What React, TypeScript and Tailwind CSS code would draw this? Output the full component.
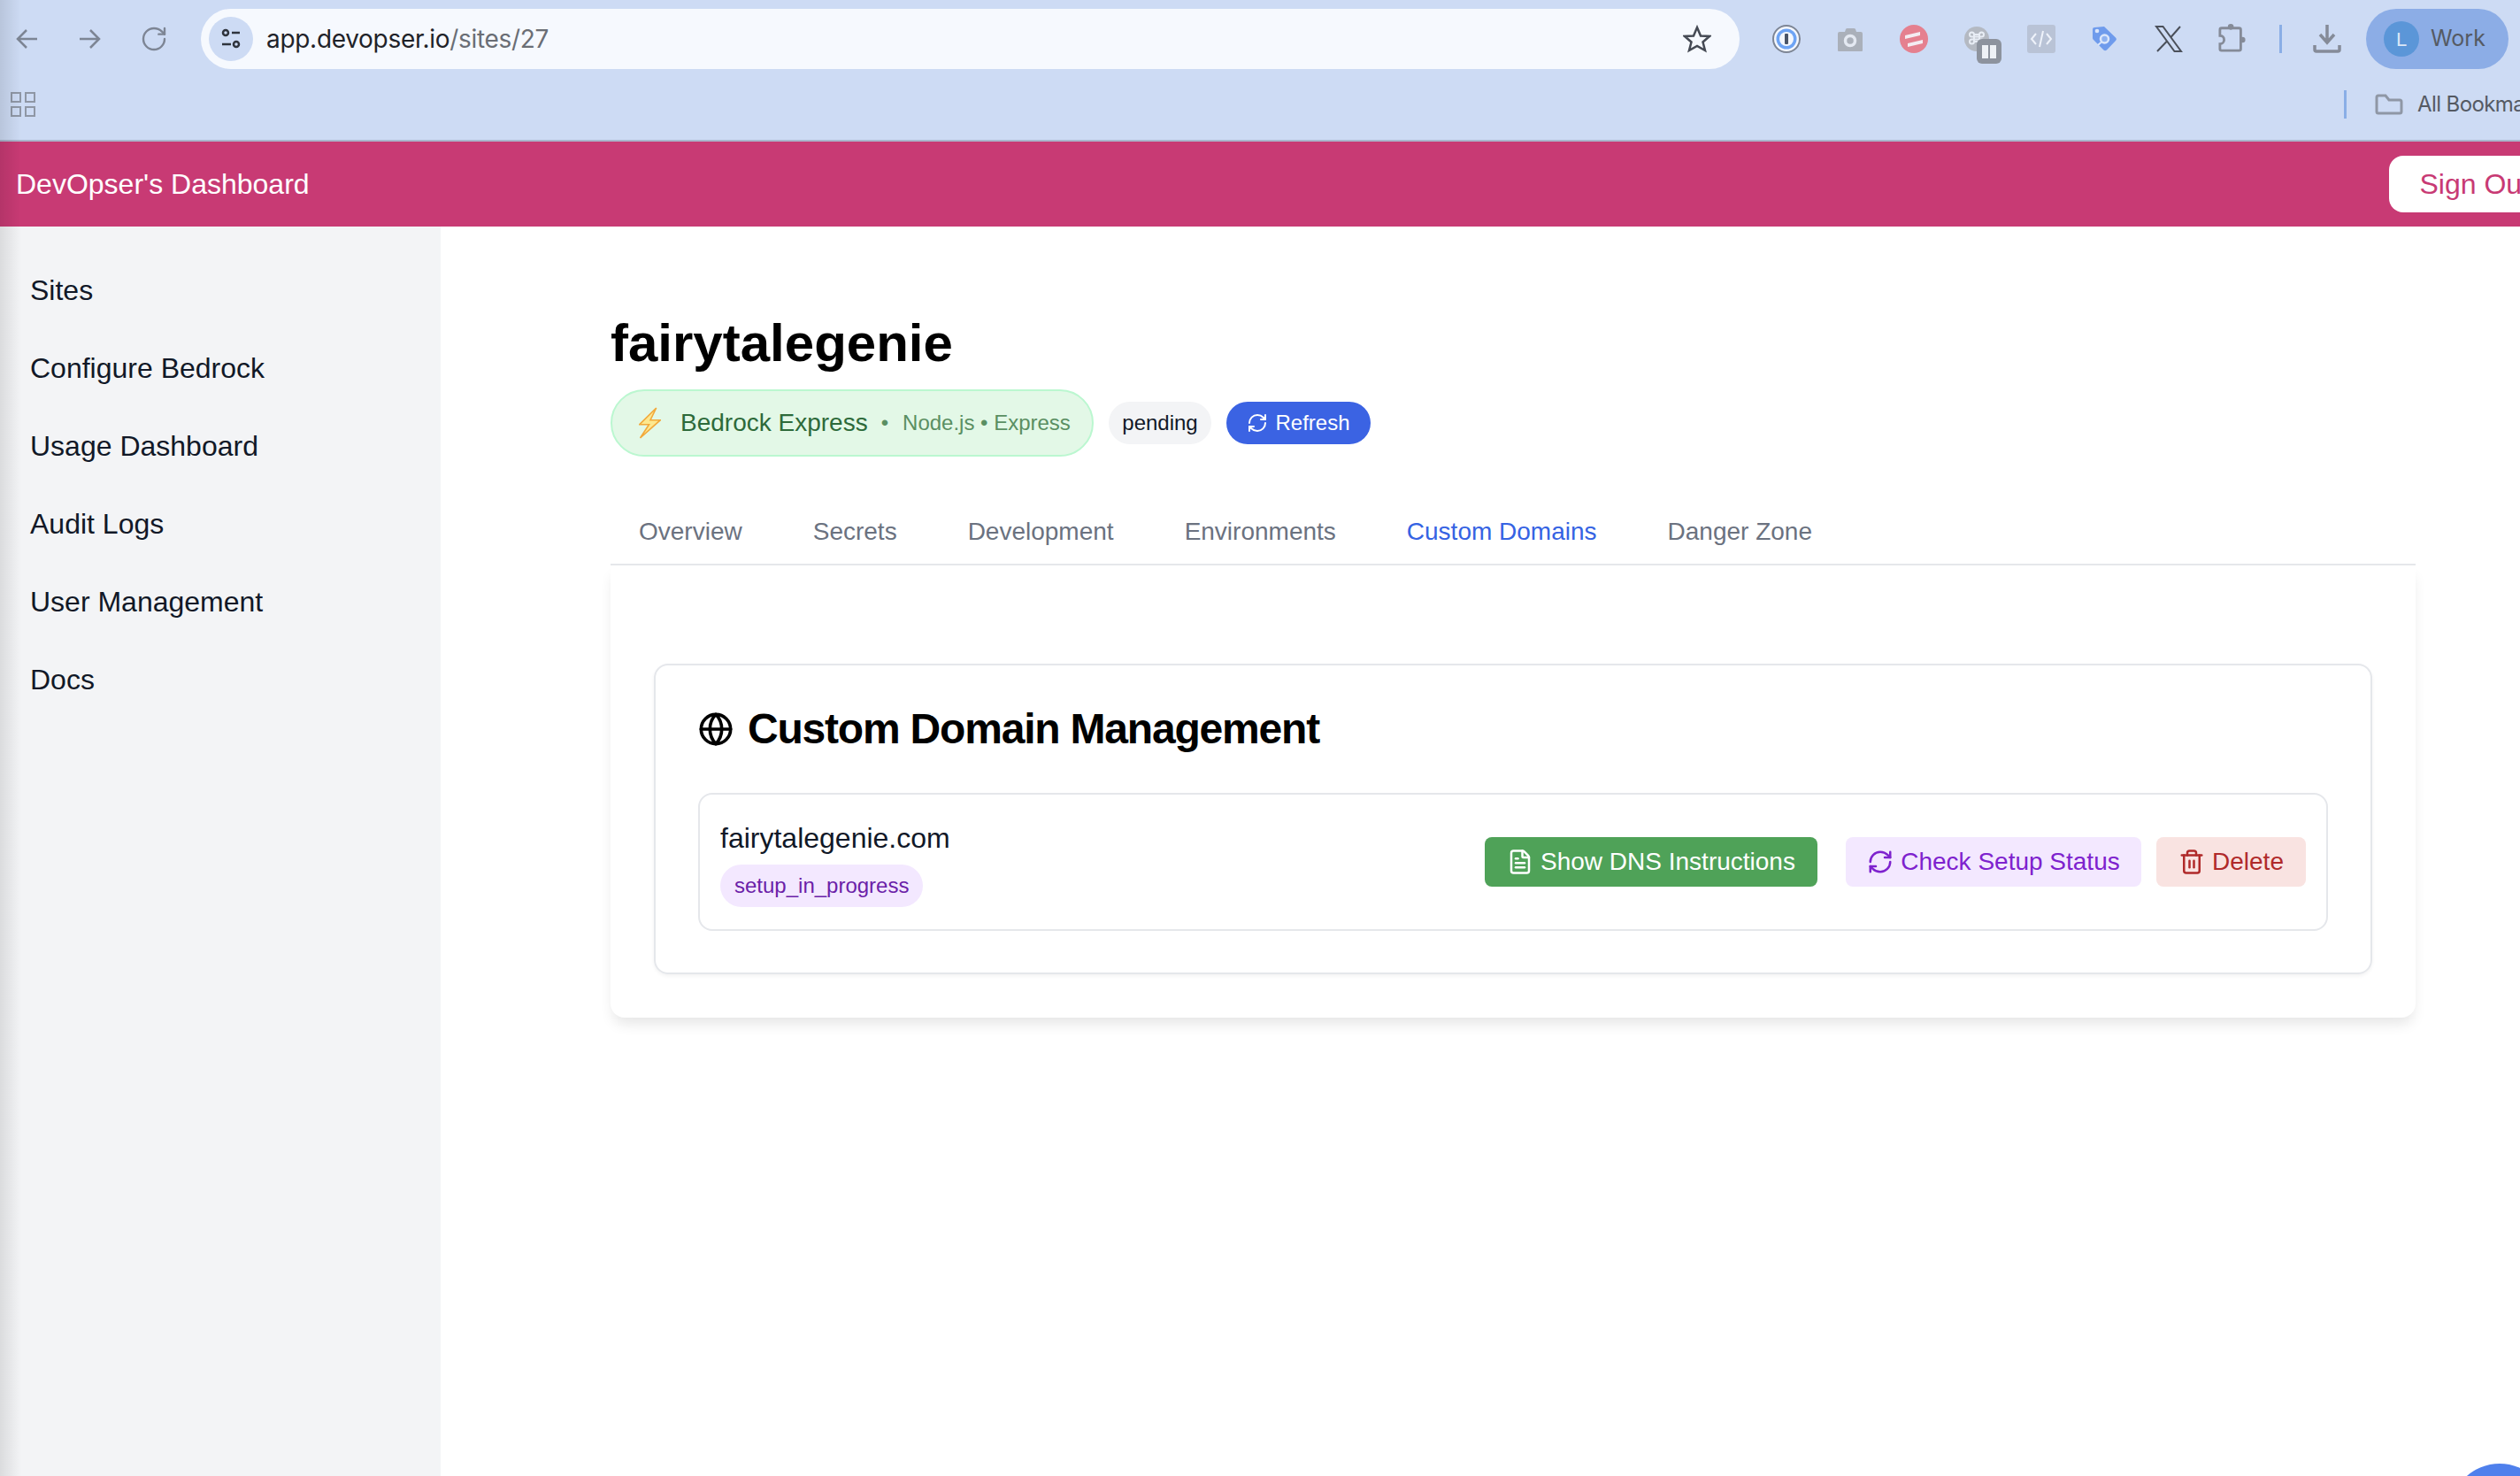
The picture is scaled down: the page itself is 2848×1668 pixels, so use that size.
import { Globe, RefreshCw, FileText, Trash2, RotateCw } from "lucide-react";

const tabs = ["Overview", "Secrets", "Development", "Environments", "Custom Domains", "Danger Zone"];
const navItems = ["Sites", "Configure Bedrock", "Usage Dashboard", "Audit Logs", "User Management", "Docs"];

const sans = "font-['Liberation_Sans',Arial,sans-serif]";

const ExtensionIcons = () => (
  <div className="flex items-center gap-[40px] ml-[37px]">
    {/* password manager */}
    <svg width="32" height="32" viewBox="0 0 32 32">
      <circle cx="16" cy="16" r="15" fill="#f4f7fd" stroke="#7d8594" strokeWidth="2" />
      <circle cx="16" cy="16" r="11.500" fill="#6ea4f4" />
      <circle cx="16" cy="16" r="8" fill="#f4f7fd" />
      <rect x="14" y="10" width="4" height="12" rx="1" fill="#4a5568" />
    </svg>
    <svg width="32" height="32" viewBox="0 0 32 32">
      <path d="M2 10a2 2 0 0 1 2-2h6l1-3a2 2 0 0 1 2-1h7a2 2 0 0 1 2 1l1 3h5a2 2 0 0 1 2 2v19a1 1 0 0 1-1 1H3a1 1 0 0 1-1-1z" fill="#aab0ba" />
      <circle cx="16" cy="18" r="5.500" fill="none" stroke="#e4e9f2" strokeWidth="3.500" />
    </svg>
    <svg width="32" height="32" viewBox="0 0 32 32">
      <circle cx="16" cy="16" r="16" fill="#e5808f" />
      <path d="M6 12l17-4v4L6 16zM9 21l17-4v4L9 25z" fill="#f4ecf2" />
      <path d="M6 17l20-4" stroke="#e5808f" strokeWidth="0.500" />
    </svg>
    <div className="relative w-[32px] h-[32px]">
      <svg width="32" height="32" viewBox="0 0 32 32">
        <circle cx="15" cy="16" r="14" fill="#b4b9c2" />
        <path d="M12 11h6v8h-6zM12 11a2.500 2.500 0 1 0-2.500 2.500H21M18 11a2.500 2.500 0 1 1 2.500 2.500M12 19a2.500 2.500 0 1 1-2.500-2.500H21M18 19a2.500 2.500 0 1 0 2.500-2.500" fill="none" stroke="#e8edf5" strokeWidth="2" />
      </svg>
      <div className="absolute left-[15px] top-[16px] w-[28px] h-[28px] rounded-[6px] bg-[#8d939e] flex items-center justify-center gap-[2px]">
        <div className="w-[7px] h-[15px] bg-[#eef1f6]" />
        <div className="w-[7px] h-[15px] bg-[#eef1f6]" />
      </div>
    </div>
    <svg width="32" height="32" viewBox="0 0 32 32">
      <rect width="32" height="32" rx="3" fill="#b9c3d6" />
      <path d="M10 10l-5 6 5 6M22 10l5 6-5 6M18 7l-4 18" fill="none" stroke="#eef2fa" strokeWidth="2" />
    </svg>
    <svg width="32" height="32" viewBox="0 0 32 32">
      <path d="M2 5Q2 3 4 3L15 2 28.500 15Q29.500 17 28 18L18 28.500Q16 30 14.500 28.500L3 17Q2 16 2 15z" fill="#6f9bec" />
      <circle cx="7" cy="7" r="2.300" fill="#dbe6fa" />
      <circle cx="15.500" cy="16" r="4.500" fill="#8fb2f0" stroke="#dbe6fa" strokeWidth="2.500" />
      <path d="M12 19.500L8 23" stroke="#dbe6fa" strokeWidth="2" />
    </svg>
    <svg width="32" height="32" viewBox="0 0 32 32">
      <path d="M2 2h7.500L30 30h-7.500zM29 2L18 14.500M14.500 18L3 30" fill="none" stroke="#4b505a" strokeWidth="2" />
    </svg>
    {/* extensions */}
    <svg width="32" height="32" viewBox="0 0 34 32" className="overflow-visible">
      <path d="M4 3h21a2 2 0 0 1 2 2v23a2 2 0 0 1-2 2H4a2 2 0 0 1-2-2v-6A5 5 0 0 0 2 12V5a2 2 0 0 1 2-2z" fill="none" stroke="#858b98" strokeWidth="3" />
      <circle cx="15" cy="1.500" r="3.500" fill="#858b98" />
      <circle cx="29" cy="17" r="3.500" fill="#858b98" />
    </svg>
  </div>
);

const App = () => (
  <div className={`relative w-[2848px] h-[1668px] overflow-hidden bg-white ${sans}`}>
    {/* browser chrome */}
    <div className="h-[160px] bg-[#cddbf4] border-b-2 border-[#a9b6cc] flex flex-col">
      <div className="h-[88px] flex items-center">
        <div className="flex items-center pl-[18px] w-[227px]">
          <svg width="24" height="24" viewBox="0 0 24 24" fill="none" stroke="#7d8594" strokeWidth="2.500">
            <path d="M24 12H2M12 2L2 12l10 10" />
          </svg>
          <svg width="24" height="24" viewBox="0 0 24 24" fill="none" stroke="#7d8594" strokeWidth="2.500" className="ml-[48px]">
            <path d="M0 12h22M12 2l10 10-10 10" />
          </svg>
          <RotateCw size={32} strokeWidth={1.800} color="#7d8594" className="ml-[44px]" />
        </div>
        <div className="w-[1739px] h-[68px] rounded-full bg-[#f6f9fe] flex items-center pl-[9px] pr-[32px]">
          <div className="w-[50px] h-[50px] rounded-full bg-[#cddbf4] flex items-center justify-center">
            <svg width="26" height="26" viewBox="0 0 26 26" fill="none" stroke="#2f343d" strokeWidth="2.500">
              <circle cx="7" cy="6" r="3" />
              <path d="M14 6h9M3 19h10" />
              <circle cx="19" cy="19" r="3" />
            </svg>
          </div>
          <div className="ml-[15px] text-[28px] font-['Inter',sans-serif] tracking-[-0.3px] text-[#1f2329] flex-1">
            app.devopser.io<span className="text-[#6a6e75]">/sites/27</span>
          </div>
          <svg width="32" height="32" viewBox="0 0 32 32" fill="none" stroke="#454a54" strokeWidth="2.500">
            <path d="M16 3l4 9.500 10 .5-7.500 6.500L25 29l-9-5-9 5 2.500-9.500L2 13l10-.5z" />
          </svg>
        </div>
        <ExtensionIcons />
        <div className="w-[3px] h-[32px] bg-[#8aaee6] ml-[37px]" />
        {/* downloads */}
        <svg width="32" height="32" viewBox="0 0 32 32" fill="none" stroke="#858b98" strokeWidth="3.500" className="ml-[35px]">
          <path d="M16 0v19M8 11l8 9 8-9M2 23v5a2 2 0 0 0 2 2h24a2 2 0 0 0 2-2v-5" />
        </svg>
        <div className="w-[161px] h-[68px] rounded-full bg-[#8cade6] ml-[28px] flex items-center pl-[20px]">
          <div className="w-[40px] h-[40px] rounded-full bg-[#5b96d8] flex items-center justify-center text-[#dce8f7] text-[22px]">L</div>
          <span className="ml-[13px] text-[25px] font-['Inter',sans-serif] text-[#555a63]">Work</span>
        </div>
      </div>
      <div className="flex-1 flex items-center pb-[10px]">
        <div className="grid grid-cols-2 gap-x-[4px] gap-y-[4px] ml-[12px]">
          {[0, 1, 2, 3].map((i) => (
            <div key={i} className="w-[12px] h-[12px] border-2 border-[#8f97a5]" />
          ))}
        </div>
        <div className="ml-auto flex items-center">
          <div className="w-[3px] h-[32px] bg-[#8aaee6]" />
          <svg width="32" height="24" viewBox="0 0 32 24" fill="none" stroke="#8f97a5" strokeWidth="3" className="ml-[32px]">
            <path d="M2 4a2 2 0 0 1 2-2h8l4 5h12a2 2 0 0 1 2 2v11a2 2 0 0 1-2 2H4a2 2 0 0 1-2-2z" />
          </svg>
          <span className="ml-[16px] w-[116px] whitespace-nowrap text-[24px] tracking-[-0.6px] font-['Inter',sans-serif] text-[#555a63]">All Bookmarks</span>
        </div>
      </div>
    </div>

    {/* app header */}
    <header className="w-[2894px] h-[96px] bg-[#c83a74] flex items-center justify-between pl-[18px] pr-[1px]">
      <span className="text-white text-[32px]">DevOpser's Dashboard</span>
      <button className="h-[64px] px-[34px] rounded-[16px] bg-white text-[#c83a74] text-[32px]">Sign Out</button>
    </header>

    <div className="flex h-[1412px]">
      <aside className="w-[498px] shrink-0 bg-[#f3f4f6] pt-[28px]">
        {navItems.map((item) => (
          <div key={item} className="h-[88px] flex items-center pl-[34px] text-[32px] text-[#111827]">
            {item}
          </div>
        ))}
      </aside>

      <main className="flex-1 pl-[192px] pr-[118px] pt-[94px]">
        <h1 className="text-[60px] leading-[76px] font-bold text-black">fairytalegenie</h1>
        <div className="flex items-center mt-[14px]">
          <div className="h-[76px] w-[546px] rounded-full border-2 border-[#bbf7d0] bg-[#e3f8e7] flex items-center pl-[30px]">
            <svg width="25" height="36" viewBox="0 0 25 36" fill="#fde88f" stroke="#f2a93b" strokeWidth="1.600">
              <path d="M19.700 1L.8 19.700h10.700L1.500 35 24.300 14.700H13z" />
            </svg>
            <span className="ml-[22px] text-[28px] text-[#2d6a3a]">Bedrock Express</span>
            <span className="ml-[15px] text-[24px] text-[#5a8f62]">•</span>
            <span className="ml-[16px] text-[24px] text-[#5a8f62]">Node.js • Express</span>
          </div>
          <div className="ml-[17px] h-[48px] w-[116px] rounded-full bg-[#f3f4f6] flex items-center justify-center text-[24px] text-[#111827]">
            pending
          </div>
          <button className="ml-[17px] h-[48px] w-[163px] rounded-full bg-[#3b63e3] flex items-center justify-center gap-[8px] text-[24px] text-white">
            <RefreshCw size={24} strokeWidth={2} />
            Refresh
          </button>
        </div>

        <div className="flex items-center h-[78px] mt-[45px] pt-[3px] border-b-2 border-[#e5e7eb] gap-[16px]">
          {tabs.map((t) => (
            <div
              key={t}
              className={`px-[32px] text-[28px] ${t === "Custom Domains" ? "text-[#3563e3]" : "text-[#6b7280]"}`}
            >
              {t}
            </div>
          ))}
        </div>

        <div className="rounded-b-[16px] shadow-[0_10px_15px_-3px_rgba(0,0,0,0.1)] px-[49px] pt-[111px] pb-[49px]">
          <div className="rounded-[16px] border-2 border-[#e5e7eb] shadow-[0_2px_4px_rgba(0,0,0,0.05)] px-[48px] pt-[46px] pb-[48px] h-[351px]">
            <div className="flex items-center gap-[16px] h-[48px] mt-[2px]">
              <Globe size={40} strokeWidth={2.200} color="#000" />
              <h2 className="text-[48px] font-bold text-black tracking-[-1.2px]">Custom Domain Management</h2>
            </div>
            <div className="mt-[48px] h-[156px] rounded-[16px] border-2 border-[#e5e7eb] flex items-center justify-between pl-[23px] pr-[23px]">
              <div>
                <div className="text-[32px] leading-[48px] text-[#111827]">fairytalegenie.com</div>
                <div className="mt-[6px] inline-flex h-[48px] px-[16px] items-center rounded-full bg-[#f3e8ff] text-[24px] text-[#6b21a8]">
                  setup_in_progress
                </div>
              </div>
              <div className="flex items-center">
                <button className="h-[56px] w-[376px] rounded-[8px] bg-[#4fa258] text-white text-[28px] flex items-center justify-center gap-[8px]">
                  <FileText size={30} strokeWidth={2} />
                  Show DNS Instructions
                </button>
                <button className="ml-[32px] h-[56px] w-[334px] rounded-[8px] bg-[#f3e8ff] text-[#7e22ce] text-[28px] flex items-center justify-center gap-[8px]">
                  <RefreshCw size={30} strokeWidth={2} />
                  Check Setup Status
                </button>
                <button className="ml-[17px] h-[56px] w-[169px] rounded-[8px] bg-[#f9e3e1] text-[#b02a2a] text-[28px] flex items-center justify-center gap-[8px]">
                  <Trash2 size={30} strokeWidth={2} />
                  Delete
                </button>
              </div>
            </div>
          </div>
        </div>
      </main>
    </div>

    {/* floating action button, cut off by the window */}
    <div className="absolute left-[2769px] top-[1654px] w-[112px] h-[112px] rounded-full bg-[#4f80ec]" />
    {/* screenshot edge shadow */}
    <div className="absolute left-0 top-0 w-[24px] h-full bg-gradient-to-r from-black/10 to-transparent pointer-events-none" />
  </div>
);

export default App;
